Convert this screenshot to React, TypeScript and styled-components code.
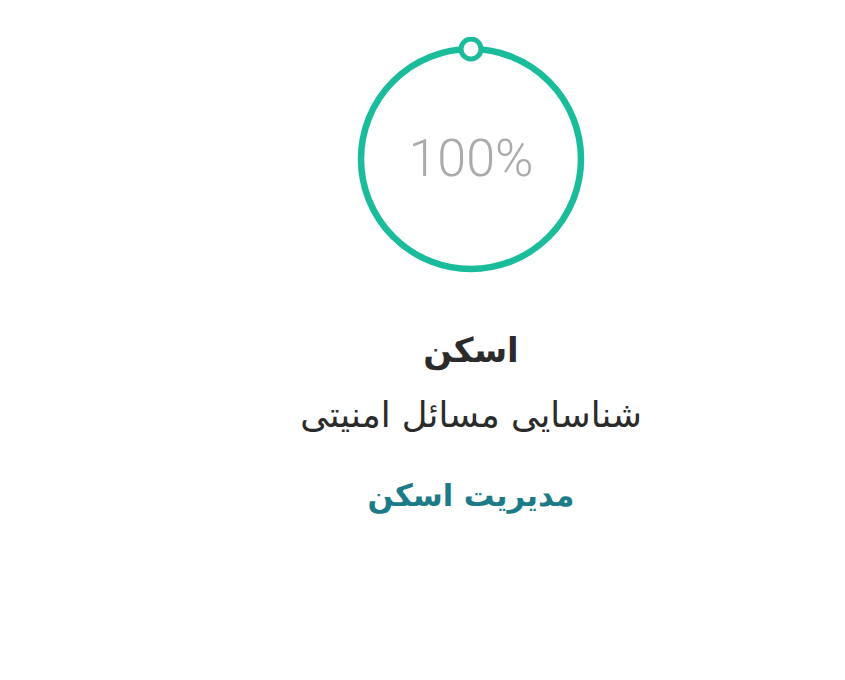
import React from "react";
import styled, { createGlobalStyle } from "styled-components";

const Global = createGlobalStyle`
  html, body { margin: 0; padding: 0; background: #fff; }
  body { font-family: "DejaVu Sans", "Noto Sans", sans-serif; }
`;

const Page = styled.div`
  display: flex;
  flex-direction: column;
  align-items: center;
  padding: 37px 0 0 97px;
  direction: rtl;
`;

const Gauge = styled.div`
  position: relative;
  width: 240px;
  height: 240px;
  display: flex;
  align-items: center;
  justify-content: center;
`;

const GaugeSvg = styled.svg`
  position: absolute;
  inset: 0;
`;

const Percent = styled.span`
  position: relative;
  font-family: Roboto, "Liberation Sans", sans-serif;
  font-weight: 300;
  font-size: 52px;
  color: #aaaaaa;
  direction: ltr;
  margin-top: 2px;
`;

const Title = styled.h2`
  margin: 51px 0 0;
  font-size: 34px;
  font-weight: 700;
  color: #2b2b2b;
  line-height: 1.3;
`;

const Subtitle = styled.p`
  margin: 20px 0 0;
  font-size: 35.4px;
  font-weight: 400;
  color: #2b2b2b;
  line-height: 1.3;
`;

const Link = styled.a`
  margin-top: 38px;
  font-size: 30.5px;
  font-weight: 700;
  color: #1b7b87;
  text-decoration: none;
  line-height: 1.3;
`;

export default function App() {
  return (
    <>
      <Global />
      <Page>
        <Gauge>
          <GaugeSvg width="240" height="240" viewBox="0 0 240 240">
            <circle cx="120" cy="122" r="110" fill="none" stroke="#1abc9c" strokeWidth="6.5" />
            <circle cx="120" cy="12" r="10" fill="#fff" stroke="#1abc9c" strokeWidth="5" />
          </GaugeSvg>
          <Percent>100%</Percent>
        </Gauge>
        <Title>اسکن</Title>
        <Subtitle>شناسایی مسائل امنیتی</Subtitle>
        <Link href="#">مدیریت اسکن</Link>
      </Page>
    </>
  );
}
